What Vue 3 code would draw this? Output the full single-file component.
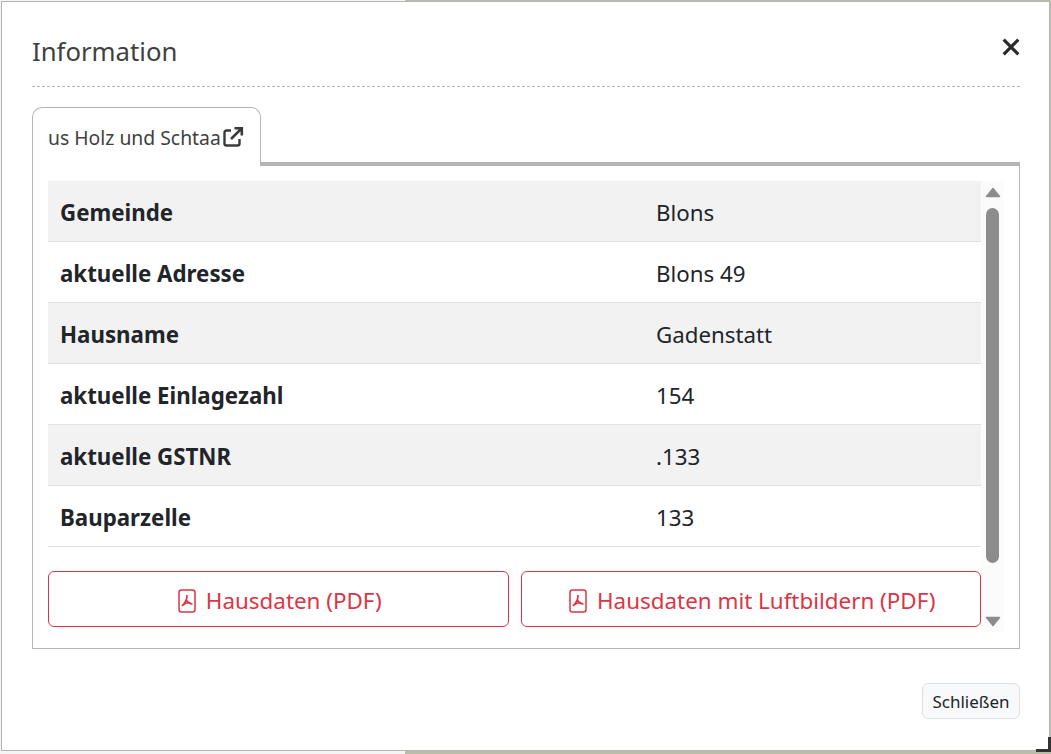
<script setup>
const rows = [
  { label: "Gemeinde", value: "Blons" },
  { label: "aktuelle Adresse", value: "Blons 49" },
  { label: "Hausname", value: "Gadenstatt" },
  { label: "aktuelle Einlagezahl", value: "154" },
  { label: "aktuelle GSTNR", value: ".133" },
  { label: "Bauparzelle", value: "133" },
];
const buttons = ["Hausdaten (PDF)", "Hausdaten mit Luftbildern (PDF)"];
</script>

<template>
  <div class="page">
    <div class="modal">
      <header class="head">
        <h1 class="title">Information</h1>
        <svg class="close" viewBox="0 0 16 16" width="18" height="18">
          <path d="M1.500 1.500l13 13M14.500 1.500l-13 13" fill="none" stroke="#2b2b2b" stroke-width="2.800" />
        </svg>
      </header>

      <div class="tabbar">
        <div class="tab">
          <span>us Holz und Schtaa</span>
          <svg class="ext" viewBox="0 0 22 22" width="22" height="22">
            <path d="M9 4.500H4.500a2 2 0 0 0-2 2v11a2 2 0 0 0 2 2h11a2 2 0 0 0 2-2V13" fill="none" stroke="#3a3a3a" stroke-width="2.400" />
            <path d="M9 13L19 3M12.500 2.200h7.300v7.300" fill="none" stroke="#3a3a3a" stroke-width="2.600" />
          </svg>
        </div>
      </div>

      <div class="panel">
        <div class="content">
          <div class="row" v-for="row in rows" :key="row.label">
            <div class="label">{{ row.label }}</div>
            <div class="value">{{ row.value }}</div>
          </div>
          <div class="actions">
            <a class="pdf" v-for="b in buttons" :key="b">
              <svg class="pdf-icon" viewBox="0 0 18 24" width="18" height="24">
                <rect x="1" y="1" width="16" height="22" rx="2.500" fill="none" stroke="#dc3545" stroke-width="1.500" />
                <path d="M9 6c.2 4-1.800 8-5 11M8.500 11.500c1.300 2 3.300 3.300 6 3.500M4 16.500c2.500-2 5-3 8-3" fill="none" stroke="#dc3545" stroke-width="1.700" />
              </svg>
              <span>{{ b }}</span>
            </a>
          </div>
        </div>
        <div class="scrollbar">
          <svg class="arrow up" viewBox="0 0 16 11" width="16" height="11">
            <path d="M8 1.500L14.500 9.500H1.500Z" fill="#8c8c8c" stroke="#8c8c8c" stroke-width="1.500" stroke-linejoin="round" />
          </svg>
          <span class="thumb"></span>
          <svg class="arrow down" viewBox="0 0 16 11" width="16" height="11">
            <path d="M8 9.500L14.500 1.500H1.500Z" fill="#8c8c8c" stroke="#8c8c8c" stroke-width="1.500" stroke-linejoin="round" />
          </svg>
        </div>
      </div>

      <footer class="foot">
        <button class="close-btn">Schließen</button>
      </footer>
      <span class="corner"></span>
    </div>
  </div>
</template>

<style>
html, body {
  margin: 0;
  padding: 0;
  overflow: hidden;
}
</style>

<style scoped>
.page {
  width: 1051px;
  height: 754px;
  box-sizing: border-box;
  padding: 1px;
  background: linear-gradient(90deg, #f4f4f4 0, #f4f4f4 405px, #b9bdaa 405px, #b9bdaa 100%);
  font-family: "Noto Sans", "Open Sans", sans-serif;
  color: #212529;
}
.modal {
  position: relative;
  box-sizing: border-box;
  width: 1049px;
  height: 750px;
  background: #fff;
  border: 1px solid #b5b5b5;
  padding: 0 29px 0 30px;
}
.head {
  display: flex;
  align-items: center;
  justify-content: space-between;
  height: 84px;
  border-bottom: 1px dashed #b5b5b5;
}
.title {
  margin: 0;
  font-size: 25.700px;
  font-weight: 400;
  color: #3f3f3f;
  line-height: 1;
  padding-top: 15px;
}
.close {
  margin-top: 5px;
}
.tabbar {
  margin-top: 20px;
  height: 55px;
  border-bottom: 4px solid #b5b5b5;
  display: flex;
}
.tab {
  box-sizing: border-box;
  width: 229px;
  height: 59px;
  padding: 0 15px 0;
  display: flex;
  align-items: center;
  background: #fff;
  border: 1px solid #b5b5b5;
  border-bottom: none;
  border-radius: 10px 10px 0 0;
  font-size: 19.350px;
  color: #3f3f3f;
  white-space: nowrap;
}
.ext {
  margin-left: 1px;
  flex: none;
}
.panel {
  box-sizing: border-box;
  height: 483px;
  border: 1px solid #b5b5b5;
  border-top: none;
  padding: 15px 15px 0;
  display: flex;
}
.content {
  width: 933px;
  flex: none;
}
.row {
  display: flex;
  align-items: center;
  box-sizing: content-box;
  height: 58px;
  padding-top: 2px;
  border-bottom: 1px solid #dee2e6;
  font-size: 22.300px;
}
.row:nth-child(odd) {
  background: #f2f2f2;
}
.label {
  width: 608px;
  box-sizing: border-box;
  padding-left: 12px;
  font-weight: 700;
}
.value {
  flex: 1;
}
.actions {
  display: flex;
  gap: 12px;
  margin-top: 24px;
}
.pdf {
  flex: 1 1 0;
  height: 56px;
  box-sizing: border-box;
  border: 1px solid #dc3545;
  border-radius: 6px;
  padding: 2px 0 0 3px;
  display: flex;
  align-items: center;
  justify-content: center;
  gap: 10px;
  color: #dc3545;
  font-size: 22.400px;
  white-space: nowrap;
}
.pdf-icon {
  flex: none;
  margin-top: 1px;
}
.scrollbar {
  width: 23px;
  height: 451px;
  background: #fbfbfb;
  position: relative;
}
.arrow {
  left: 4px;
  position: absolute;
}
.arrow.up {
  top: 6px;
}
.arrow.down {
  bottom: 5px;
}
.thumb {
  position: absolute;
  left: 5px;
  top: 27px;
  width: 13px;
  height: 355px;
  background: #8c8c8c;
  border-radius: 7px;
}
.foot {
  display: flex;
  justify-content: flex-end;
  margin-top: 34px;
}
.close-btn {
  width: 98px;
  height: 36px;
  box-sizing: border-box;
  background: #f8f9fa;
  border: 1px solid #dee2e6;
  border-radius: 6px;
  color: #212529;
  font-family: inherit;
  font-size: 17px;
  padding: 0;
}
.corner {
  position: absolute;
  right: -2px;
  bottom: -2px;
  width: 15px;
  height: 15px;
  border-right: 3px solid #333;
  border-bottom: 3px solid #333;
  box-sizing: border-box;
}
</style>
